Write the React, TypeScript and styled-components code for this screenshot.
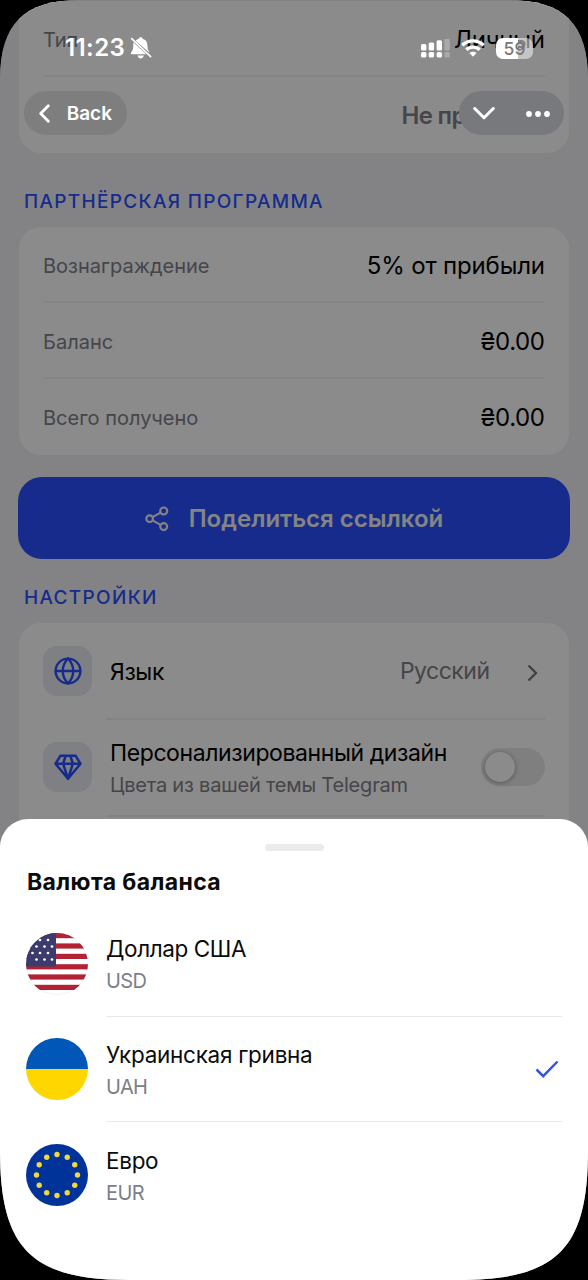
import React from "react";
import styled, { createGlobalStyle } from "styled-components";

const Global = createGlobalStyle`
  * { box-sizing: border-box; }
  html, body { margin: 0; padding: 0; background: #000; }
  body { font-family: Inter, "Noto Sans", sans-serif; }
`;

const Device = styled.div`
  position: relative;
  width: 588px;
  height: 1280px;
  overflow: hidden;
  background: #f1f1f5;
  clip-path: path("M0 80C0 24 24 0 80 0H508C564 0 588 24 588 80V1150C588 1249 557 1280 458 1280H130C31 1280 0 1249 0 1150Z");
`;

const Page = styled.main`
  display: flex;
  flex-direction: column;
  padding: 1px 19px 0;
`;

const Card = styled.section<{ $flatTop?: boolean }>`
  background: #fff;
  border-radius: ${(p) => (p.$flatTop ? "0 0 22px 22px" : "22px")};
  padding: 0 24px;
`;

const InfoRow = styled.div`
  display: flex;
  align-items: center;
  justify-content: space-between;
  height: 76px;
  padding-top: 3px;
  border-bottom: 2px solid #f2f2f4;
  &:last-child { border-bottom: 0; padding-bottom: 1px; }
`;

const Text = styled.span<{ $size: number; $track?: number; $weight?: number; $color?: string }>`
  font-size: ${(p) => p.$size}px;
  font-weight: ${(p) => p.$weight ?? 400};
  letter-spacing: ${(p) => p.$track ?? 0}px;
  margin-right: ${(p) => -(p.$track ?? 0)}px;
  color: ${(p) => p.$color ?? "#000"};
  line-height: 32px;
  white-space: nowrap;
`;

const SectionTitle = styled.h2`
  margin: 0;
  padding: 0 5px;
  height: 74px;
  line-height: 97px;
  font-size: 19px;
  font-weight: 550;
  letter-spacing: 1.32px;
  color: #2950ff;
  white-space: nowrap;
`;

const ShareButton = styled.button`
  display: flex;
  align-items: center;
  justify-content: center;
  gap: 20px;
  height: 82px;
  margin: 22px -1px -10px;
  padding: 2px 0 0;
  border: 0;
  border-radius: 24px;
  background: #2950ff;
  font-family: inherit;
`;

const SettingRow = styled.div<{ $h: number }>`
  display: flex;
  align-items: center;
  height: ${(p) => p.$h}px;
`;

const IconTile = styled.div`
  display: flex;
  align-items: center;
  justify-content: center;
  width: 49px;
  height: 50px;
  border-radius: 14px;
  background: #e7ebf1;
  flex: none;
`;

const Stack = styled.div`
  display: flex;
  flex-direction: column;
  flex: 1;
  margin-left: 18px;
  padding-top: 3px;
`;

const Chevron = styled.svg`
  margin: 5px 7px 0 37px;
`;

const Divider = styled.div`
  height: 2px;
  margin-left: 63px;
  margin-bottom: -1px;
  background: #f0f0f2;
`;

const Toggle = styled.div`
  display: flex;
  align-items: center;
  width: 64px;
  height: 38px;
  padding: 4px;
  border-radius: 19px;
  background: #e9e9ea;
`;

const Knob = styled.div`
  width: 30px;
  height: 30px;
  border-radius: 50%;
  background: #fff;
  box-shadow: 0 1px 5px rgba(0, 0, 0, 0.35);
`;

const Scrim = styled.div`
  position: absolute;
  inset: 0;
  background: rgba(0, 0, 0, 0.455);
`;

const StatusBar = styled.div`
  position: absolute;
  top: 32px;
  left: 65px;
  right: 55px;
  display: flex;
  align-items: center;
  height: 32px;
`;

const StatusIcons = styled.div`
  display: flex;
  align-items: center;
  gap: 11px;
  margin-left: auto;
`;

const Battery = styled.div`
  display: flex;
  align-items: center;
  justify-content: center;
  width: 37px;
  height: 21px;
  border-radius: 7px;
  background: linear-gradient(90deg, #fff 59%, rgba(255, 255, 255, 0.5) 59%);
  color: #777;
  font-size: 17.5px;
  font-weight: 500;
  line-height: 21px;
`;

const NavBar = styled.nav`
  position: absolute;
  top: 91px;
  left: 24px;
  right: 24px;
  display: flex;
  justify-content: space-between;
`;

const Pill = styled.div<{ $w: number; $bg: string; $pad: number }>`
  display: flex;
  align-items: center;
  width: ${(p) => p.$w}px;
  height: 44px;
  border-radius: 22px;
  background: ${(p) => p.$bg};
  padding: 1px ${(p) => p.$pad}px 0;
  justify-content: space-between;
`;

const Sheet = styled.section`
  position: absolute;
  left: 0;
  right: 0;
  bottom: 0;
  height: 461px;
  padding: 25px 26px 0;
  border-radius: 28px 28px 0 0;
  background: #fff;
`;

const Handle = styled.div`
  width: 59px;
  height: 7px;
  margin: 0 auto;
  border-radius: 4px;
  background: #ebebeb;
`;

const SheetTitle = styled.h1`
  margin: 14px 0 12px 1px;
  line-height: 34px;
  font-size: 23px;
  font-weight: 700;
  letter-spacing: 0.38px;
  color: #0b0b0c;
`;

const CurrencyRow = styled.div`
  display: flex;
  align-items: center;
  height: 105.5px;
`;

const CurrencyBody = styled.div<{ $last?: boolean }>`
  display: flex;
  align-items: center;
  flex: 1;
  height: 100%;
  margin-left: 18px;
  border-bottom: ${(p) => (p.$last ? "0" : "1.5px solid #e9e9eb")};
`;

const CurrencyText = styled.div`
  display: flex;
  flex-direction: column;
  flex: 1;
  padding-top: 4px;
`;

const CheckIcon = styled.svg`
  margin-right: 3px;
`;

const MUTED = "#7e8088";

const BellOff = styled.svg`
  margin-left: 5px;
`;

const Signal = () => (
  <svg width="29" height="19" viewBox="0 0 29 19" fill="#fff">
    <rect x="0" y="5" width="5.4" height="6.5" rx="1.5" />
    <rect x="7.7" y="3.5" width="5.4" height="8" rx="1.5" />
    <rect x="15.6" y="1.2" width="5.4" height="10.3" rx="1.5" />
    <rect x="0" y="13" width="5.4" height="5.6" rx="1.5" />
    <rect x="7.7" y="13" width="5.4" height="5.6" rx="1.5" />
    <rect x="15.6" y="13" width="5.4" height="5.6" rx="1.5" />
    <g fillOpacity=".27">
      <rect x="23.4" y="-.5" width="5.4" height="12" rx="1.5" />
      <rect x="23.4" y="13" width="5.4" height="5.6" rx="1.5" />
    </g>
  </svg>
);

const Wifi = () => (
  <svg width="24" height="18" viewBox="0 0 24 18" fill="none" stroke="#fff" strokeWidth="3.3">
    <path d="M1.300 6.200a15.400 15.400 0 0 1 21.400 0" />
    <path d="M5.300 10.800a9.600 9.600 0 0 1 13.400 0" />
    <path d="M12 17.700 8.400 14.100a5.200 5.200 0 0 1 7.200 0Z" fill="#fff" stroke="none" />
  </svg>
);

const ShareIcon = () => (
  <svg width="24" height="26" viewBox="0 0 24 26" fill="none" stroke="#f2f2f2" strokeWidth="2.1">
    <circle cx="4.6" cy="12.7" r="3.3" />
    <circle cx="18.7" cy="5" r="3.5" />
    <circle cx="18.7" cy="20.6" r="3.5" />
    <path d="m7.500 11.100 8.100-4.500M7.500 14.300l8.100 4.600" />
  </svg>
);

const GlobeIcon = () => (
  <svg width="28" height="28" viewBox="0 0 28 28" fill="none" stroke="#2950ff" strokeWidth="2.4">
    <circle cx="14" cy="14" r="12.4" />
    <path d="M1.500 14h25M14 1.500c-7 7.400-7 17.600 0 25 7-7.400 7-17.600 0-25Z" />
  </svg>
);

const GemIcon = () => (
  <svg width="28" height="28" viewBox="0 0 28 28" fill="none" stroke="#2950ff" strokeWidth="2.5" strokeLinejoin="round">
    <path d="M6.500 2.700h15l5 8L14 25.800 1.500 10.700l5-8ZM1.500 10.700h25M11.700 2.700l-2.600 8L14 25.800l4.900-15.100-2.600-8" />
  </svg>
);

const Star = ({ x, y }: { x: number; y: number }) => <circle cx={x} cy={y} r="1.35" fill="#fff" />;

const UsFlag = () => (
  <svg width="62" height="62" viewBox="0 0 62 62">
    <clipPath id="us"><circle cx="31" cy="31" r="31" /></clipPath>
    <g clipPath="url(#us)">
      <rect width="62" height="62" fill="#fff" />
      {[0, 10.4, 20.8, 31.2, 41.4, 51.8].map((y) => (
        <rect key={y} y={y} width="62" height="5.2" fill="#b22234" />
      ))}
      <rect width="30" height="33.5" fill="#3c3b6e" />
      {[[14, 7], [22, 7], [10.5, 13.5], [18.5, 13.5], [26, 13.5], [6.5, 20], [14, 20], [22, 20], [10.5, 26.5], [18.5, 26.5], [26, 26.5]].map(([x, y]) => (
        <Star key={`${x}-${y}`} x={x} y={y} />
      ))}
      <circle cx="31" cy="31" r="30.5" fill="none" stroke="#000" strokeOpacity=".06" />
    </g>
  </svg>
);

const UaFlag = () => (
  <svg width="62" height="62" viewBox="0 0 62 62">
    <path d="M0 31a31 31 0 0 1 62 0Z" fill="#0057b7" />
    <path d="M0 31a31 31 0 0 0 62 0Z" fill="#ffd700" />
  </svg>
);

const EuFlag = () => (
  <svg width="62" height="62" viewBox="0 0 62 62">
    <circle cx="31" cy="31" r="31" fill="#039" />
    {Array.from({ length: 12 }, (_, i) => (
      <circle key={i} cx={31 + 20.5 * Math.sin((i * Math.PI) / 6)} cy={31 - 20.5 * Math.cos((i * Math.PI) / 6)} r="2.7" fill="#f0d840" />
    ))}
  </svg>
);

const currencies = [
  { name: "Доллар США", code: "USD", flag: <UsFlag />, track: -0.4 },
  { name: "Украинская гривна", code: "UAH", flag: <UaFlag />, track: -0.27, selected: true },
  { name: "Евро", code: "EUR", flag: <EuFlag />, track: -0.3 },
];

export default function App() {
  return (
    <>
      <Global />
      <Device>
        <Page>
          <Card $flatTop>
            <InfoRow>
              <Text $size={20} $color={MUTED}>Тип</Text>
              <Text $size={24} $track={-0.2}>Личный</Text>
            </InfoRow>
            <InfoRow>
              <span />
              <Text $size={24} $weight={600} $track={-0.7} $color={MUTED}>Не привязан</Text>
            </InfoRow>
          </Card>
          <SectionTitle>ПАРТНЁРСКАЯ ПРОГРАММА</SectionTitle>
          <Card>
            <InfoRow>
              <Text $size={20} $color={MUTED}>Вознаграждение</Text>
              <Text $size={24} $track={-0.15}>5% от прибыли</Text>
            </InfoRow>
            <InfoRow>
              <Text $size={20} $color={MUTED}>Баланс</Text>
              <Text $size={24} $track={-0.4}>₴0.00</Text>
            </InfoRow>
            <InfoRow>
              <Text $size={20} $color={MUTED}>Всего получено</Text>
              <Text $size={24} $track={-0.4}>₴0.00</Text>
            </InfoRow>
          </Card>
          <ShareButton>
            <ShareIcon />
            <Text $size={24} $weight={600} $color="#f2f2f2">Поделиться ссылкой</Text>
          </ShareButton>
          <SectionTitle>НАСТРОЙКИ</SectionTitle>
          <Card>
            <SettingRow $h={95}>
              <IconTile><GlobeIcon /></IconTile>
              <Stack><Text $size={23} $track={-0.4}>Язык</Text></Stack>
              <Text $size={23} $track={-0.5} $color={MUTED}>Русский</Text>
              <Chevron width="11" height="18" viewBox="0 0 11 18" fill="none" stroke="#777a82" strokeWidth="2.4">
                <path d="m1.500 1.500 7.500 7.500-7.500 7.500" />
              </Chevron>
            </SettingRow>
            <Divider />
            <SettingRow $h={96}>
              <IconTile><GemIcon /></IconTile>
              <Stack>
                <Text $size={23} $track={-0.4}>Персонализированный дизайн</Text>
                <Text $size={20} $track={-0.2} $color={MUTED}>Цвета из вашей темы Telegram</Text>
              </Stack>
              <Toggle><Knob /></Toggle>
            </SettingRow>
            <Divider />
            <SettingRow $h={96} />
          </Card>
        </Page>
        <Scrim />
        <NavBar>
          <Pill $w={103} $bg="#7e7e7e" $pad={15}>
            <svg width="11" height="19" viewBox="0 0 11 19" fill="none" stroke="#fff" strokeWidth="2.8" strokeLinecap="round" strokeLinejoin="round">
              <path d="M9.300 1.700 1.700 9.500l7.600 7.800" />
            </svg>
            <Text $size={19} $weight={600} $color="#fff">Back</Text>
          </Pill>
          <Pill $w={105} $bg="#77797c" $pad={14}>
            <svg width="22" height="13" viewBox="0 0 22 13" fill="none" stroke="#fff" strokeWidth="3" strokeLinecap="round" strokeLinejoin="round">
              <path d="m1.700 1.500 9.300 9.300 9.300-9.300" />
            </svg>
            <svg width="24" height="6" viewBox="0 0 24 6" fill="#fff">
              <circle cx="3" cy="3" r="2.9" /><circle cx="12" cy="3" r="2.9" /><circle cx="21" cy="3" r="2.9" />
            </svg>
          </Pill>
        </NavBar>
        <StatusBar>
          <Text $size={24} $weight={600} $track={0.4} $color="#fff">11:23</Text>
          <BellOff width="22" height="22" viewBox="0 0 22 22">
            <path d="M3.400 5.200 16.200 17.200H1.900c-1.100 0-1.500-1.100-.7-1.900 1.600-1.600 1.900-3 2-5.700.1-1.700 0-3 .2-4.400ZM5.600 3.700C6.400 2.700 7.400 2.100 8.600 1.900 8.800.8 9.600.2 10.700.2s1.900.6 2.100 1.700c3 .6 4.500 2.900 4.600 6.200.1 3.100.3 4.900 1.700 6.500.3.400.4.800.4 1.200L5.600 3.700Z" fill="#fff" />
            <path d="M7.600 18.500h6.200c-.3 1.700-1.500 2.900-3.100 2.900s-2.800-1.200-3.100-2.900Z" fill="#fff" />
            <path d="m1.700 1.600 18.900 18" stroke="#fff" strokeWidth="1.7" strokeLinecap="round" />
          </BellOff>
          <StatusIcons>
            <Signal />
            <Wifi />
            <Battery>59</Battery>
          </StatusIcons>
        </StatusBar>
        <Sheet>
          <Handle />
          <SheetTitle>Валюта баланса</SheetTitle>
          {currencies.map((c, i) => (
            <CurrencyRow key={c.code}>
              {c.flag}
              <CurrencyBody $last={i === currencies.length - 1}>
                <CurrencyText>
                  <Text $size={22.5} $track={c.track} $color="#0b0b0c">{c.name}</Text>
                  <Text $size={20} $track={-0.6} $color="#7b8089">{c.code}</Text>
                </CurrencyText>
                {c.selected && (
                  <CheckIcon width="24" height="18" viewBox="0 0 24 18" fill="none" stroke="#3355e0" strokeWidth="2.5">
                    <path d="m1.500 9.500 6.700 6.700L22.500 1.500" />
                  </CheckIcon>
                )}
              </CurrencyBody>
            </CurrencyRow>
          ))}
        </Sheet>
      </Device>
    </>
  );
}
